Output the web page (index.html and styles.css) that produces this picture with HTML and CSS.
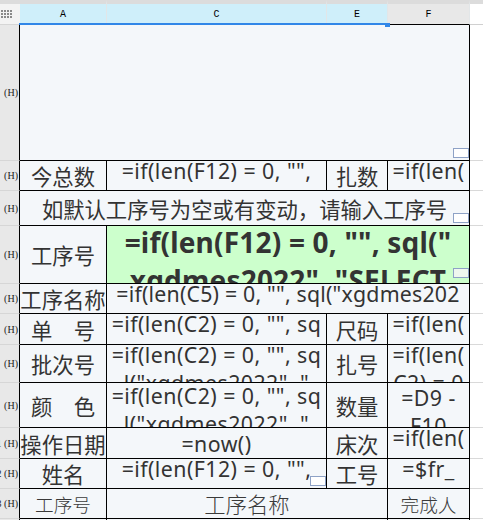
FILE: index.html
```html
<!DOCTYPE html>
<html lang="zh">
<head>
<meta charset="utf-8">
<title>Sheet</title>
<link rel="stylesheet" href="styles.css">
</head>
<body>
<div class="sheet">
  <div class="corner"><svg width="11" height="8" viewBox="0 0 11 8"><g fill="#8a8a8a"><rect x="0" y="0" width="2" height="2"/><rect x="3" y="0" width="2" height="2"/><rect x="6" y="0" width="2" height="2"/><rect x="9" y="0" width="2" height="2"/><rect x="0" y="3" width="2" height="2"/><rect x="3" y="3" width="2" height="2"/><rect x="6" y="3" width="2" height="2"/><rect x="9" y="3" width="2" height="2"/><rect x="0" y="6" width="2" height="2"/><rect x="3" y="6" width="2" height="2"/><rect x="6" y="6" width="2" height="2"/><rect x="9" y="6" width="2" height="2"/></g></svg></div>
  <div class="ch sel">A</div>
  <div class="ch sel">C</div>
  <div class="ch sel">E</div>
  <div class="ch">F</div>
  <div class="ch blank"></div>

  <div class="rh"><span>(H)</span></div>
  <div class="c all"><span class="mark"></span></div>
  <div class="o"></div>

  <div class="rh"><span>(H)</span></div>
  <div class="c">今总数</div>
  <div class="c f"><div class="ln">=if(len(F12) = 0, "",</div></div>
  <div class="c">扎数</div>
  <div class="c f"><div class="ln">=if(len(</div></div>
  <div class="o"></div>

  <div class="rh"><span>(H)</span></div>
  <div class="c all">如默认工序号为空或有变动，请输入工序号<span class="mark"></span></div>
  <div class="o"></div>

  <div class="rh"><span>(H)</span></div>
  <div class="c">工序号</div>
  <div class="c f g cf"><div class="ln">=if(len(F12) = 0, "", sql("</div><div class="ln">xgdmes2022", "SELECT</div><span class="mark gm"></span></div>
  <div class="o"></div>

  <div class="rh"><span>(H)</span></div>
  <div class="c">工序名称</div>
  <div class="c f cf wide"><div class="ln">=if(len(C5) = 0, "", sql("xgdmes202</div></div>
  <div class="o"></div>

  <div class="rh"><span>(H)</span></div>
  <div class="c">单　号</div>
  <div class="c f"><div class="ln">=if(len(C2) = 0, "", sq</div></div>
  <div class="c">尺码</div>
  <div class="c f"><div class="ln">=if(len(</div></div>
  <div class="o"></div>

  <div class="rh"><span>(H)</span></div>
  <div class="c">批次号</div>
  <div class="c f"><div class="ln">=if(len(C2) = 0, "", sq</div><div class="ln">l("xgdmes2022", "</div></div>
  <div class="c">扎号</div>
  <div class="c f"><div class="ln">=if(len(</div><div class="ln">C2) = 0</div></div>
  <div class="o"></div>

  <div class="rh"><span>(H)</span></div>
  <div class="c">颜　色</div>
  <div class="c f low"><div class="ln">=if(len(C2) = 0, "", sq</div><div class="ln">l("xgdmes2022", "</div></div>
  <div class="c">数量</div>
  <div class="c f lower"><div class="ln">=D9 -</div><div class="ln">F10</div></div>
  <div class="o"></div>

  <div class="rh"><span>11 (H)</span></div>
  <div class="c">操作日期</div>
  <div class="c lat">=now()</div>
  <div class="c">床次</div>
  <div class="c f"><div class="ln">=if(len(</div></div>
  <div class="o"></div>

  <div class="rh"><span>12 (H)</span></div>
  <div class="c">姓名</div>
  <div class="c f"><div class="ln">=if(len(F12) = 0, "",</div><span class="mark"></span></div>
  <div class="c">工号</div>
  <div class="c f"><div class="ln">=$fr_</div></div>
  <div class="o"></div>

  <div class="rh"><span>13 (H)</span></div>
  <div class="c lt sm">工序号</div>
  <div class="c lt ce">工序名称</div>
  <div class="c lt sm">完成人</div>
  <div class="o"></div>

  <div class="rh"></div>
  <div class="c"></div>
  <div class="c ce"></div>
  <div class="c"></div>
  <div class="o"></div>

  <div class="selline"></div>
  <div class="handle"></div>
</div>
</body>
</html>
```

FILE: styles.css
```css
html, body {
  margin: 0;
  padding: 0;
  background: #fff;
}
body {
  width: 483px;
  height: 520px;
  overflow: hidden;
}
.sheet {
  position: relative;
  display: grid;
  grid-template-columns: 20px 87px 220px 61px 82px 1fr;
  grid-template-rows: 25px 136px 30px 35px 58px 30px 31px 38px 45px 31px 30px 30px 30px;
}
.corner {
  box-sizing: border-box;
  border-top: 4px solid #dcdcdc;
  border-bottom: 1px solid #d6d6d6;
  background: #f3f3f3;
  display: flex;
  align-items: center;
  padding-left: 1px;
}
.ch {
  box-sizing: border-box;
  border-top: 4px solid #dcdcdc;
  border-bottom: 1px solid #000;
  border-right: 1px solid #e2e6e8;
  background: #e8e8e8;
  font: 10px "Liberation Mono", monospace;
  color: #000;
  display: flex;
  align-items: center;
  justify-content: center;
  padding-top: 1px;
}
.ch.sel {
  background: #cfeffa;
}
.ch.blank {
  background: #fff;
  border-right: none;
  border-bottom: 1px solid #d0d0d0;
}
.rh {
  box-sizing: border-box;
  background: #e8e8e8;
  border-right: 1px solid #000;
  border-bottom: 1px solid #d6d6d6;
  overflow: hidden;
  display: flex;
  align-items: center;
  justify-content: flex-end;
  padding-right: 1px;
  font: 10px "Liberation Serif", serif;
  color: #222;
  white-space: nowrap;
}
.c {
  box-sizing: border-box;
  position: relative;
  border-right: 1px solid #000;
  border-bottom: 1px solid #000;
  background: #f4f7fa;
  overflow: hidden;
  display: flex;
  align-items: center;
  justify-content: center;
  white-space: nowrap;
  font: 21.33px "Noto Sans CJK SC", sans-serif;
  color: #333;
}
.c.all {
  grid-column: 2 / 6;
}
.c.cf {
  grid-column: 3 / 6;
}
.c.ce {
  grid-column: 3 / 5;
}
.c.f {
  display: block;
  text-align: center;
  font-family: "Noto Sans", "Noto Sans CJK SC", sans-serif;
  line-height: 28px;
  letter-spacing: 0.45px;
}
.c.f.wide {
  letter-spacing: 0.2px;
}
.c.f .ln {
  white-space: nowrap;
}
.c.f .ln:first-child {
  margin-top: -4px;
}
.c.f.low .ln:first-child {
  margin-top: -1px;
}
.c.f.lower .ln:first-child {
  margin-top: 1px;
}
.c.lat {
  font-family: "Noto Sans", "Noto Sans CJK SC", sans-serif;
  letter-spacing: 0.45px;
}
.c.g {
  background: #ccffcc;
  font-weight: bold;
  font-size: 28px;
  line-height: 38px;
  letter-spacing: 0.2px;
}
.c.g .ln:first-child {
  margin-top: -3px;
}
.c.lt {
  font-weight: 300;
  color: #3a3a3a;
}
.c.sm {
  font-size: 18.67px;
}
.o {
  background: #fff;
  border-bottom: 1px solid #d9d9d9;
}
.mark {
  position: absolute;
  right: 0;
  bottom: 2px;
  width: 14px;
  height: 8px;
  border: 1px solid #8ea2c6;
  background: #fff;
}
.mark.gm {
  bottom: 5px;
  background: #eef7ee;
}
.selline {
  position: absolute;
  left: 19px;
  top: 23px;
  width: 366px;
  height: 2px;
  background: #3187e8;
}
.handle {
  position: absolute;
  left: 385px;
  top: 23px;
  width: 5px;
  height: 4px;
  background: #3187e8;
}
```
